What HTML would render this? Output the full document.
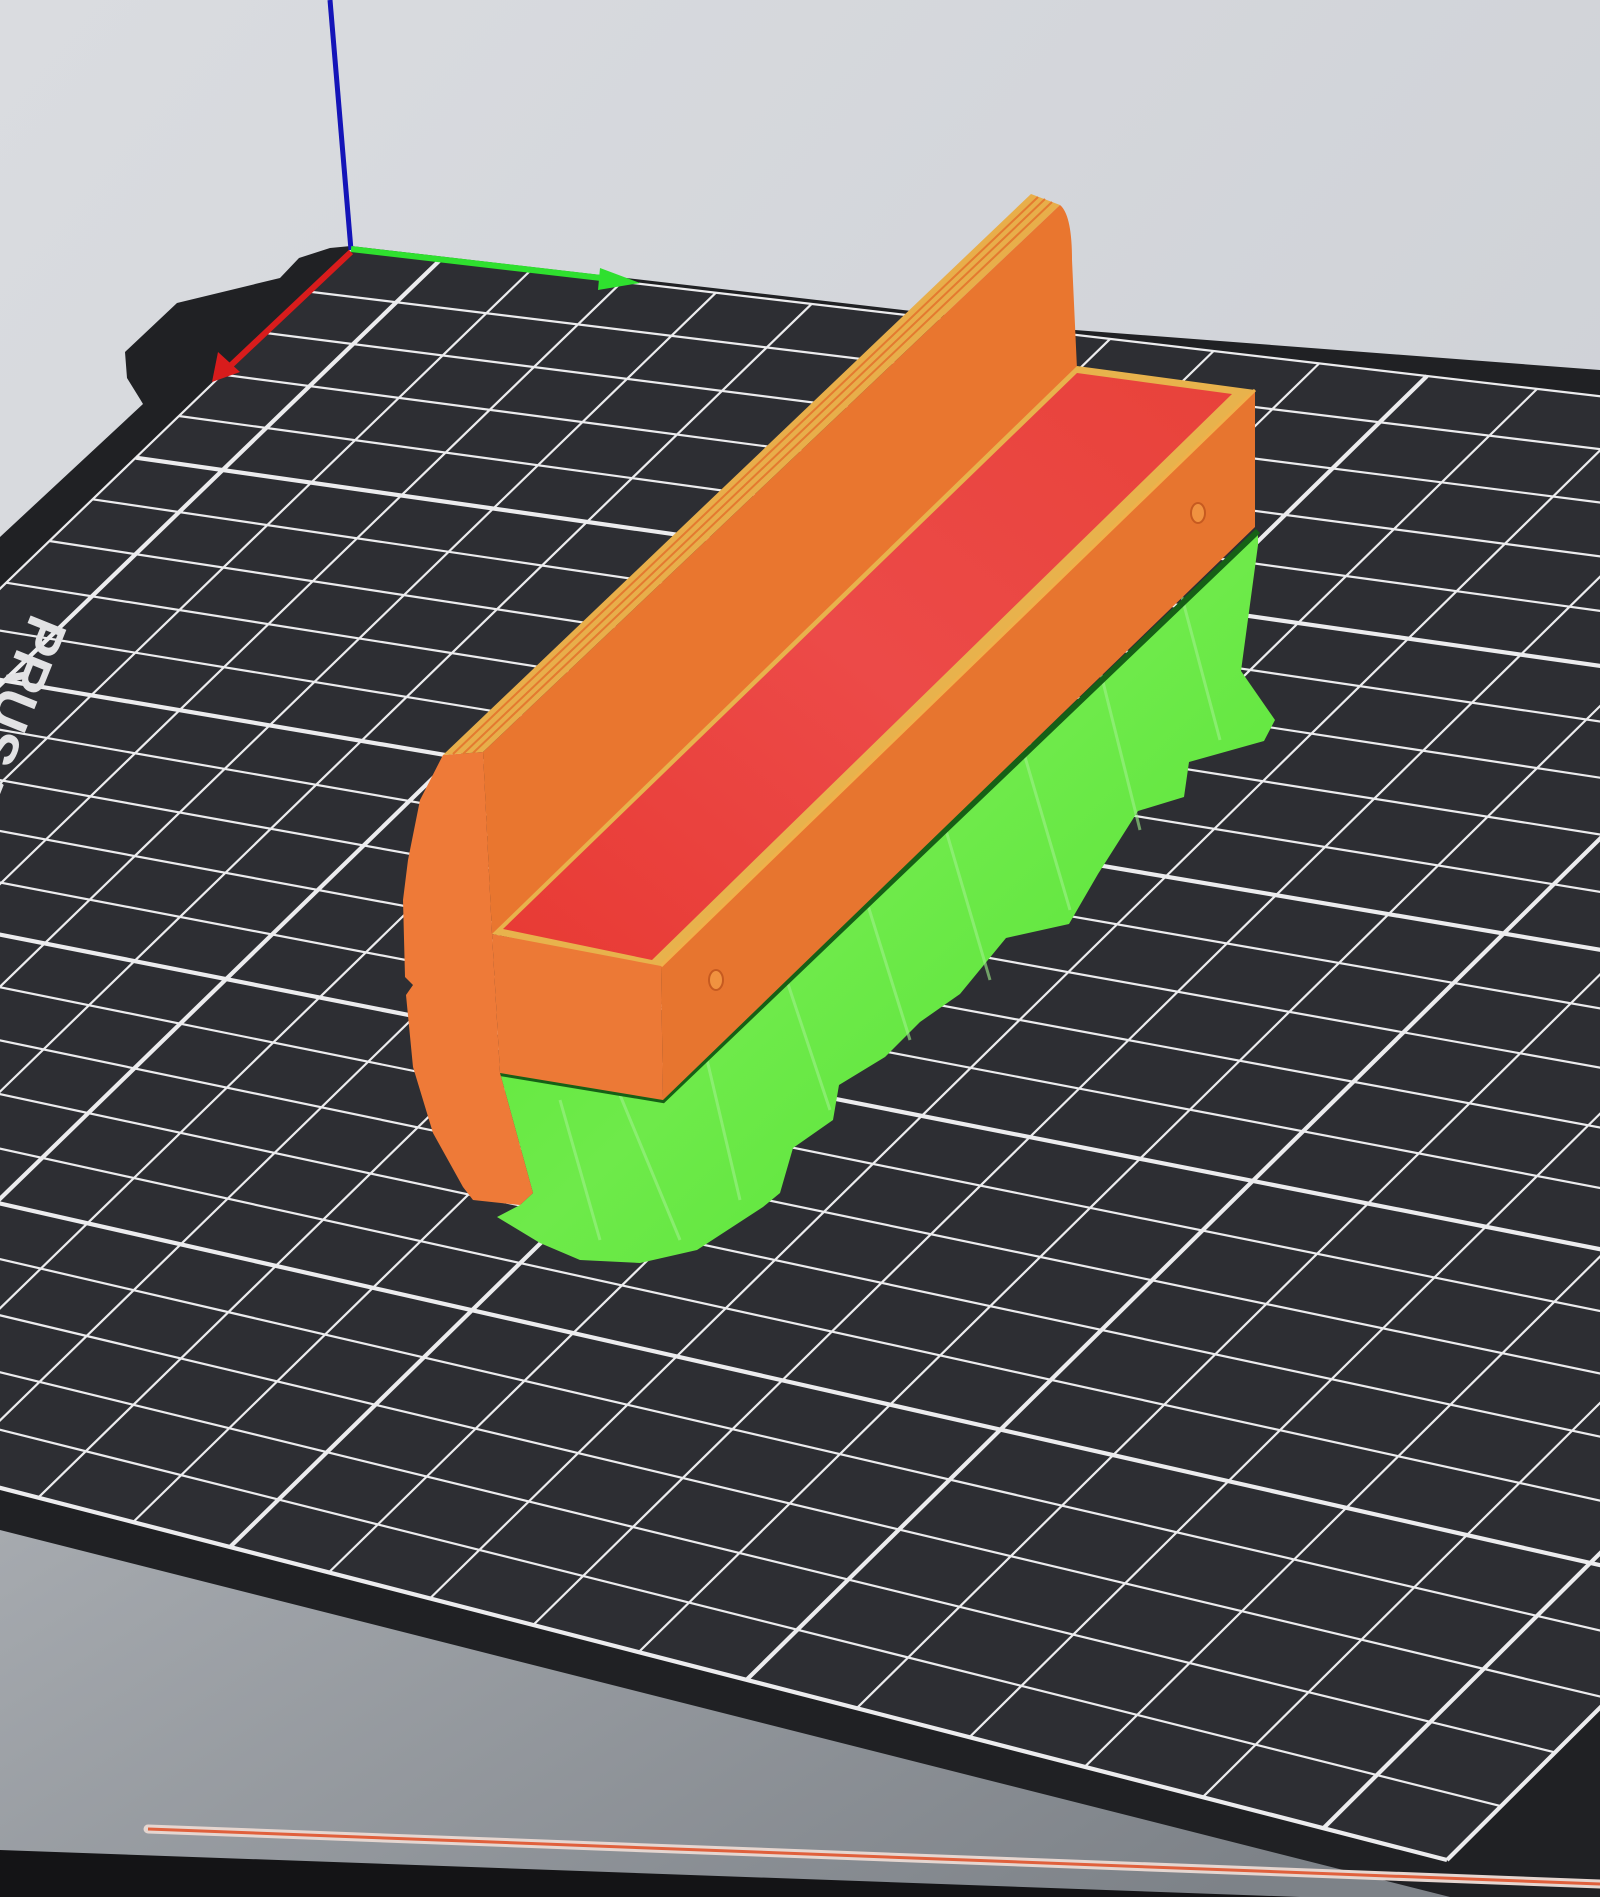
<!DOCTYPE html>
<html><head><meta charset="utf-8"><style>
html,body{margin:0;padding:0;width:1600px;height:1897px;overflow:hidden;background:#d3d5da}
svg{display:block}
</style></head><body>
<svg id="s" width="1600" height="1897" viewBox="0 0 1600 1897" xmlns="http://www.w3.org/2000/svg">
<defs>
<linearGradient id="bg" x1="0" y1="0" x2="1" y2="1"><stop offset="0" stop-color="#dadce0"/><stop offset="1" stop-color="#c9ccd2"/></linearGradient>
<linearGradient id="low" x1="0" y1="0" x2="1" y2="0.4"><stop offset="0" stop-color="#a7abb0"/><stop offset="1" stop-color="#7d8288"/></linearGradient>
<linearGradient id="gr" x1="0" y1="0" x2="1" y2="1"><stop offset="0" stop-color="#55e830"/><stop offset="0.5" stop-color="#6eea4a"/><stop offset="1" stop-color="#4fe12e"/></linearGradient>
<linearGradient id="rd" x1="0" y1="1" x2="1" y2="0"><stop offset="0" stop-color="#e83a34"/><stop offset="0.5" stop-color="#ec4a48"/><stop offset="1" stop-color="#e8423a"/></linearGradient>
</defs>
<rect width="1600" height="1897" fill="url(#bg)"/>
<!-- area below bed -->
<polygon points="0,1500 1600,1800 1600,1897 0,1897" fill="url(#low)"/>
<polygon points="0,1850 1300,1897 0,1897" fill="#141416"/>
<!-- bed -->
<polygon points="351,246 1075,330 1600,370 1600,1897 1450,1897 0,1530 0,537 143,404 140,399 127,378 125,352 177,303 280,278 299,258 330,248" fill="#202124"/>
<g id="grid"></g>
<!-- PRU text -->
<text x="32" y="612" transform="rotate(112 32 612)" font-family="Liberation Sans, sans-serif" font-weight="bold" font-size="56" fill="#e2e2e4">PRUSA</text>
<!-- axes -->
<line x1="330" y1="0" x2="351" y2="250" stroke="#1414b8" stroke-width="5"/>
<line x1="351" y1="249" x2="610" y2="279" stroke="#2fe02f" stroke-width="6"/>
<polygon points="600,268 640,283 598,290" fill="#2fe02f"/>
<line x1="351" y1="252" x2="228" y2="368" stroke="#d81c1c" stroke-width="6"/>
<polygon points="218,352 212,382 240,372" fill="#d81c1c"/>
<!-- green supports -->
<polygon points="500,1073 663,1100 1258,531 1258,545 1241,671 1275,720 1264,741 1189,762 1184,797 1138,811 1098,874 1069,924 1006,938 960,994 920,1022 885,1057 839,1085 833,1120 793,1148 780,1193 763,1207 697,1250 640,1263 580,1260 540,1243 497,1217 520,1205 533,1193" fill="url(#gr)"/>
<g fill="none" stroke="#9ef08a" stroke-width="3" opacity="0.6">
<path d="M560,1100 L600,1240 M620,1095 L680,1240 M700,1030 L740,1200 M780,960 L830,1110 M860,880 L910,1040 M940,810 L990,980 M1020,740 L1070,910 M1100,670 L1140,830 M1180,590 L1220,740"/>
</g>
<polyline points="500,1073 663,1100 1258,531" fill="none" stroke="#166016" stroke-width="6"/>
<!-- left end face -->
<polygon points="443,755 483,752 492,934 500,1073 533,1193 520,1205 473,1200 463,1187 433,1133 413,1067 406,995 413,985 405,977 403,900 408,860 420,800" fill="#ee7a38"/>
<!-- fin top strip -->
<polygon points="443,755 1031,194 1060,205 483,752" fill="#e8ae4a"/>
<g stroke="#e47a30" stroke-width="2"><line x1="453" y1="754" x2="1038" y2="197"/><line x1="463" y1="754" x2="1045" y2="199"/><line x1="473" y1="753" x2="1052" y2="202"/></g>
<!-- fin front face -->
<path d="M483,752 L1060,205 Q1072,215 1072,260 L1077,369 L503,927 L492,934 Z" fill="#e9762f"/>
<!-- rim -->
<polygon points="492,934 1077,366 1255,390 661,968" fill="#e8b24c"/>
<!-- red channel -->
<polygon points="503,929 1077,373 1232,394 652,960" fill="url(#rd)"/>
<!-- block front -->
<polygon points="661,966 1255,390 1255,527 663,1100" fill="#e7752f"/>
<!-- block left face -->
<polygon points="492,934 661,966 663,1100 500,1073" fill="#ec7936"/>
<line x1="661" y1="966" x2="1255" y2="390" stroke="#f0b04a" stroke-width="3"/>
<!-- holes -->
<ellipse cx="1198" cy="513" rx="7" ry="10" fill="#f09240" stroke="#c65a20" stroke-width="2"/>
<ellipse cx="716" cy="980" rx="7" ry="10" fill="#f09240" stroke="#c65a20" stroke-width="2"/>
<!-- red line tube -->
<line x1="148" y1="1829" x2="1600" y2="1884" stroke="#e6d6d0" stroke-width="9" stroke-linecap="round"/>
<line x1="148" y1="1829" x2="1600" y2="1884" stroke="#e0603c" stroke-width="3"/>
</svg>
<script>
(function(){
function solve(A,b){var n=b.length;for(var i=0;i<n;i++){var m=i;for(var r=i+1;r<n;r++)if(Math.abs(A[r][i])>Math.abs(A[m][i]))m=r;var t=A[i];A[i]=A[m];A[m]=t;t=b[i];b[i]=b[m];b[m]=t;for(r=i+1;r<n;r++){var f=A[r][i]/A[i][i];for(var c=i;c<n;c++)A[r][c]-=f*A[i][c];b[r]-=f*b[i];}}var x=new Array(n);for(i=n-1;i>=0;i--){var s=b[i];for(c=i+1;c<n;c++)s-=A[i][c]*x[c];x[i]=s/A[i][i];}return x;}
var P=[[0,0,351,250],[11,0,1427,376],[11,25,230,1547],[22,25,1447,1860]];
var A=[],b=[];P.forEach(function(p){var u=p[0],v=p[1],x=p[2],y=p[3];A.push([u,v,1,0,0,0,-u*x,-v*x]);b.push(x);A.push([0,0,0,u,v,1,-u*y,-v*y]);b.push(y);});
var h=solve(A,b);
function M(u,v){var w=h[6]*u+h[7]*v+1;return[(h[0]*u+h[1]*v+h[2])/w,(h[3]*u+h[4]*v+h[5])/w];}
var NU=22,NV=25,out='';
var c=[M(0,0),M(NU,0),M(NU,NV),M(0,NV)];
out+='<polygon points="'+c.map(function(p){return p[0].toFixed(1)+','+p[1].toFixed(1)}).join(' ')+'" fill="#2d2e33"/>';
function ln(a,b2,w){out+='<line x1="'+a[0].toFixed(1)+'" y1="'+a[1].toFixed(1)+'" x2="'+b2[0].toFixed(1)+'" y2="'+b2[1].toFixed(1)+'" stroke="#ececee" stroke-width="'+w+'"/>';}
var thickU={1:1,6:1,11:1,16:1,21:1},thickV={5:1,10:1,15:1,20:1,25:1};
for(var u=0;u<=NU;u++){ln(M(u,0),M(u,NV),(thickU[u]||u==NU)?4.2:2.2);}
for(var v=0;v<=NV;v++){ln(M(0,v),M(NU,v),thickV[v]?4.2:2.2);}
document.getElementById('grid').innerHTML=out;
})();
</script>
</body></html>
